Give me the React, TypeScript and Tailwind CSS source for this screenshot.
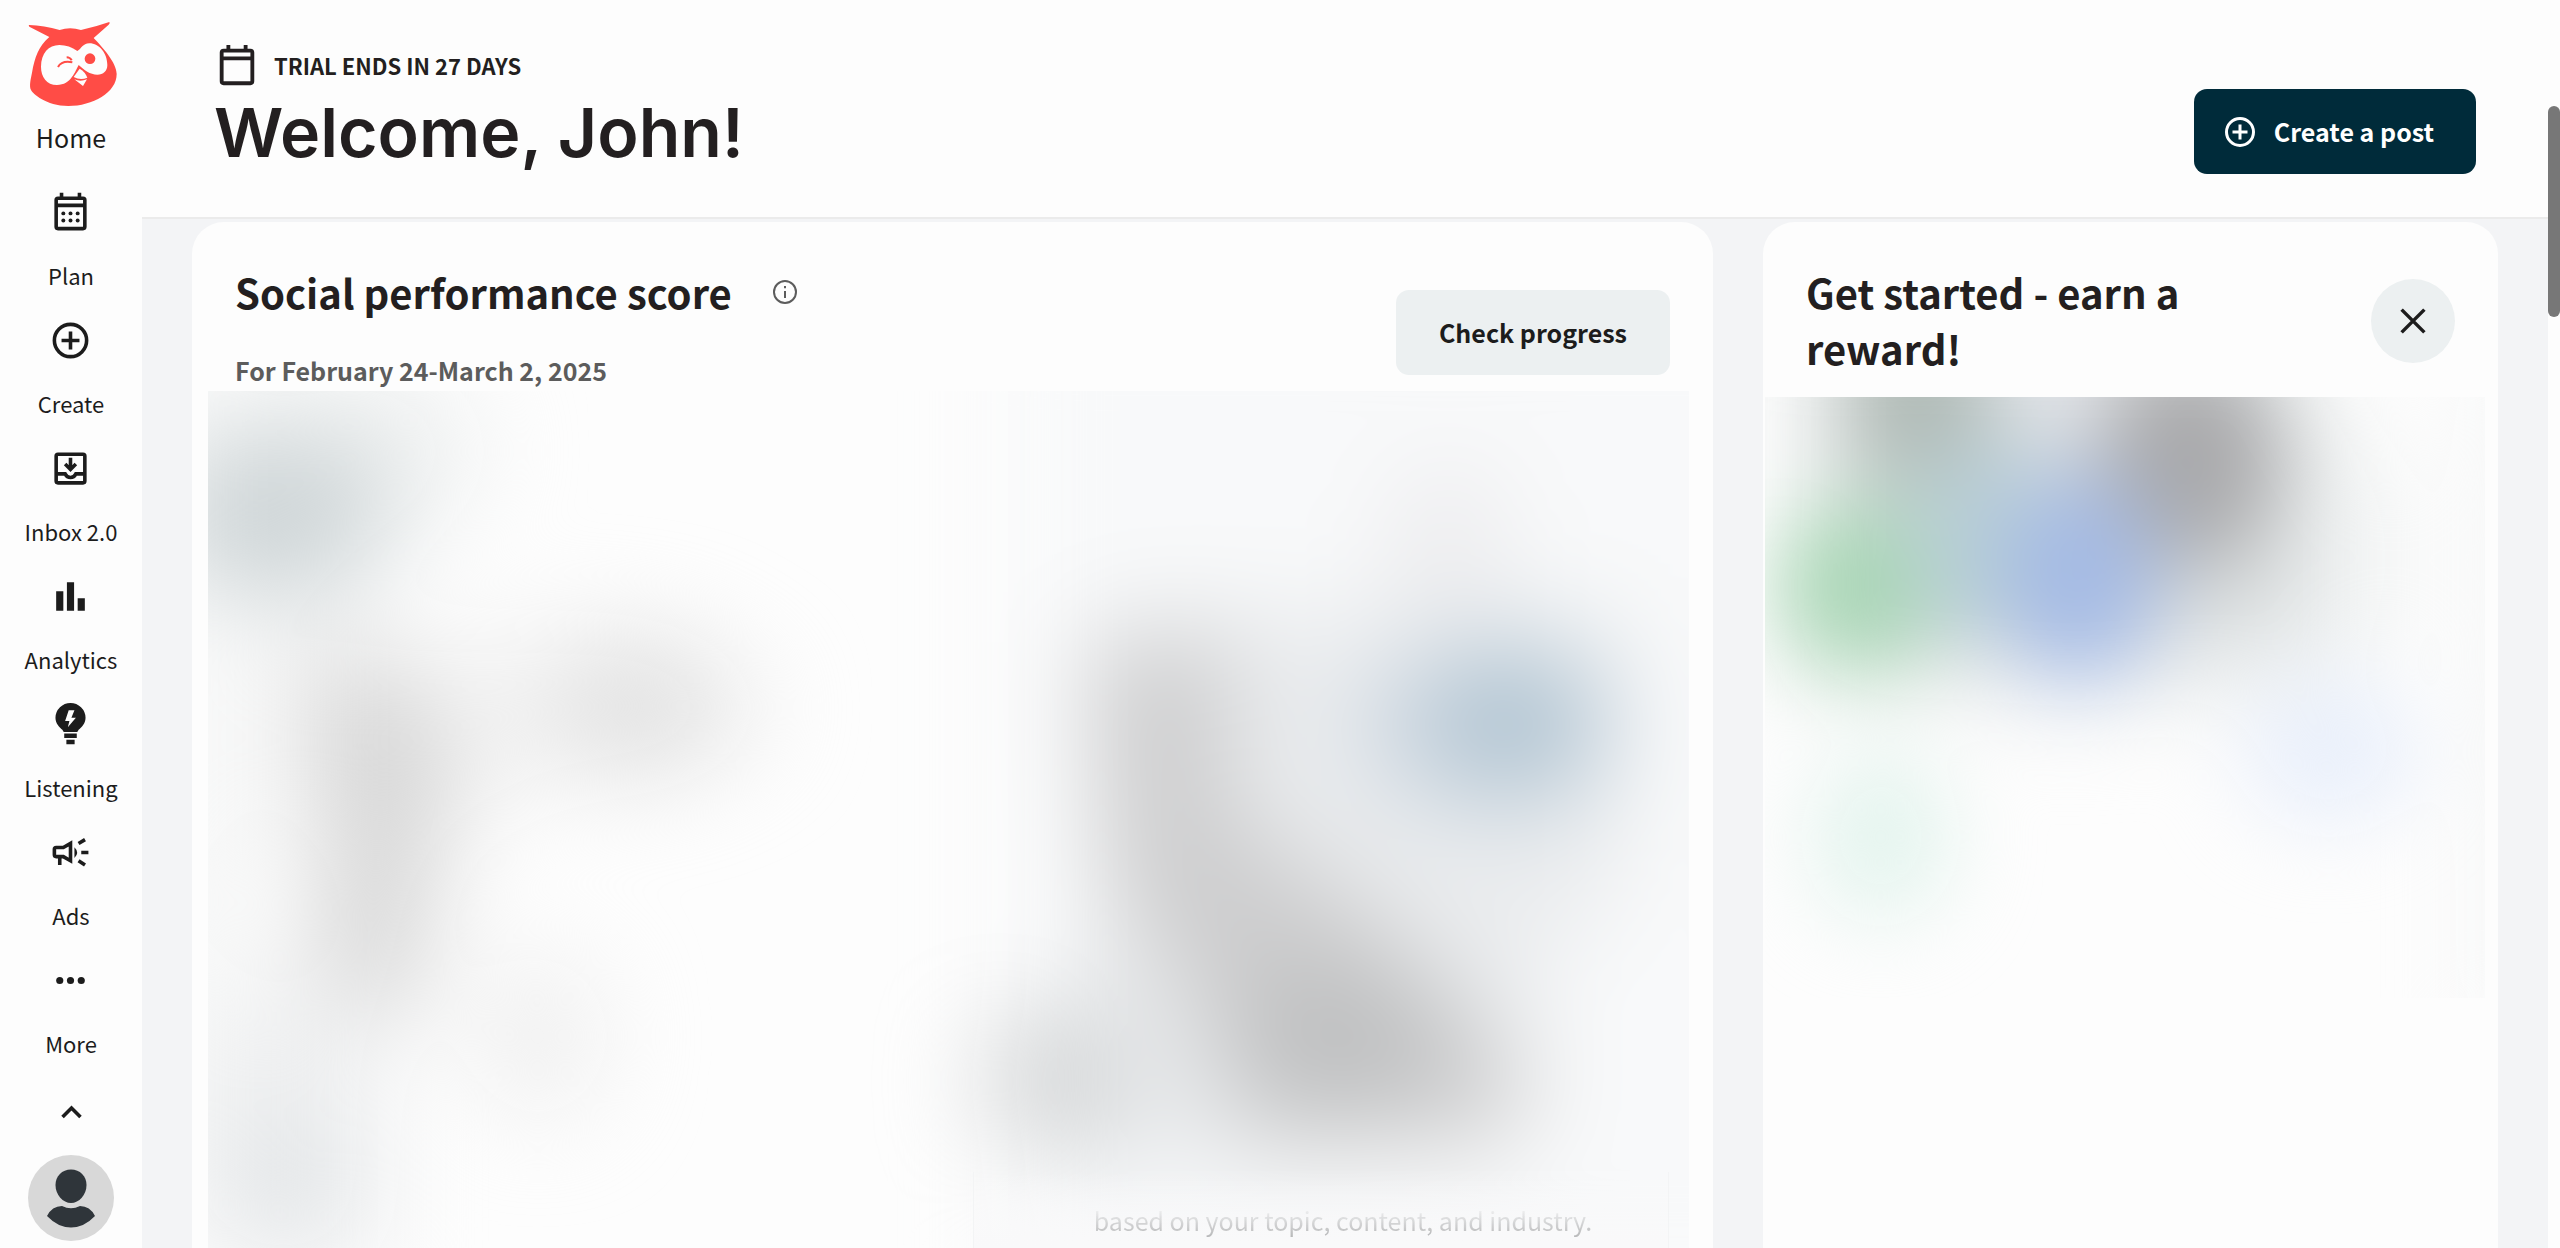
import type { ReactNode } from 'react';

function Icon({ children, className = 'h-[43px] w-[43px]' }: { children: ReactNode; className?: string }) {
  return (
    <svg viewBox="0 0 24 24" fill="none" stroke="currentColor" strokeWidth="2" className={className} aria-hidden="true">
      {children}
    </svg>
  );
}

function OwlLogo() {
  return (
    <svg viewBox="84 60 270 261" className="h-[87px] w-[90px]" aria-hidden="true">
      <path
        fill="#ff4c46"
        d="M87 75Q132 76 179 90Q210 80 243 90Q288 80 328 66Q331 70 326 74L281 114C306 140 350 188 350 222C350 278 278 318 205 318C138 318 98 280 93 270C87 258 92 238 96 218C104 172 116 138 148 111L88 80Q85 76 87 75Z"
      />
      <path
        fill="#fdfdfd"
        d="M178 135C198 135 216 142 232 153C244 147 248 130 268 130C298 130 322 160 322 195C322 213 310 224 292 224C270 224 252 210 236 195C226 212 214 255 171 255C140 255 123 231 123 200C123 160 146 135 178 135Z"
      />
      <circle cx="270" cy="176" r="16" fill="#ff4c46" />
      <path d="M174 201C182 187 197 183 217 187M200 172Q210 172 215 181" fill="none" stroke="#ff4c46" strokeWidth="6" />
      <path d="M239 206L221 231Q241 242 262 233Q256 216 239 206Z" fill="#fdfdfd" />
      <path d="M223 238Q241 246 261 238L249 258Z" fill="#fdfdfd" />
    </svg>
  );
}

const navItems = [
  {
    label: 'Plan',
    icon: (
      <>
        <rect x="4" y="4" width="16" height="17" rx="1" />
        <path d="M4 8h16M7 1v3M17 1v3" />
        <g fill="currentColor" stroke="none">
          <circle cx="8" cy="12.5" r="1.1" />
          <circle cx="12" cy="12.5" r="1.1" />
          <circle cx="16" cy="12.5" r="1.1" />
          <circle cx="8" cy="16.5" r="1.1" />
          <circle cx="12" cy="16.5" r="1.1" />
          <circle cx="16" cy="16.5" r="1.1" />
        </g>
      </>
    ),
  },
  {
    label: 'Create',
    icon: (
      <>
        <circle cx="12" cy="12" r="9" />
        <path d="M12 7v10M7 12h10" />
      </>
    ),
  },
  {
    label: 'Inbox 2.0',
    icon: (
      <>
        <rect x="4" y="4" width="16" height="16" rx="1" />
        <path d="M4 15h5q1 2 3 2t3-2h5M12 6v6.5M9 9.5l3 3 3-3" />
      </>
    ),
  },
  {
    label: 'Analytics',
    icon: <path fill="currentColor" stroke="none" d="M4 9h4v11H4zM10 4h4v16h-4zM16 13h4v7h-4z" />,
  },
  {
    label: 'Listening',
    icon: (
      <path
        fill="currentColor"
        stroke="none"
        fillRule="evenodd"
        d="M12 0a8.4 8.4 0 0 1 8.4 8.2c0 3.3-2.2 5.4-4 6.8-.2 1-.7 1.2-1.4 1.2H9c-.7 0-1.2-.2-1.4-1.2-1.8-1.4-4-3.5-4-6.8A8.4 8.4 0 0 1 12 0zM11 4 9 10h2.4l-.9 3.6L15 8.300h-2.500L14.200 4zM8.500 17h7v2.500h-7zM9.700 20.500h4.600V23H9.700z"
      />
    ),
  },
  {
    label: 'Ads',
    icon: (
      <>
        <path d="M8 9.200H4q-1 0-1 1v3.100q0 1 1 1h4l4 2.300V6.900zM6 15v4" />
        <path d="M14.200 9q3 3 0 6z" fill="currentColor" stroke="none" />
        <path d="M18 12h4M16.500 7l3.600-2.200M16.500 16.600l3.600 2.400" />
      </>
    ),
  },
  {
    label: 'More',
    icon: (
      <g fill="currentColor" stroke="none">
        <circle cx="6" cy="12" r="2" />
        <circle cx="12" cy="12" r="2" />
        <circle cx="18" cy="12" r="2" />
      </g>
    ),
  },
];

function Sidebar() {
  return (
    <aside className="flex w-[142px] shrink-0 flex-col items-center pt-5">
      <a href="#home" className="flex flex-col items-center gap-[14px] pl-1">
        <OwlLogo />
        <span className="pr-1 text-[25px] leading-8">Home</span>
      </a>
      <nav className="pt-[38px]">
        <ul className="flex flex-col gap-[30px]">
          {navItems.map((item) => (
            <li key={item.label}>
              <a href="#" className="flex flex-col items-center gap-[27px] text-[22px] leading-7 whitespace-nowrap">
                <Icon>{item.icon}</Icon>
                {item.label}
              </a>
            </li>
          ))}
        </ul>
      </nav>
      <button type="button" aria-label="Collapse" className="mt-[34px]">
        <Icon>
          <path d="m7 14.500 5-5 5 5" />
        </Icon>
      </button>
      <button type="button" aria-label="Account" className="mt-[21px]">
        <svg viewBox="0 0 86 86" className="h-[86px] w-[86px]">
          <circle cx="43" cy="43" r="43" fill="#d8d8d8" />
          <path d="M43 14.500c9 0 15.500 6.500 15.500 15.500 0 10-7.500 18-15.500 18S27.500 40 27.500 30c0-9 6.500-15.500 15.500-15.500z" fill="#2f353a" />
          <path d="M19 61q5-10 15-10 9 4.500 18 0 10 0 15 10Q56 72.500 43 72.500T19 61z" fill="#2f353a" />
        </svg>
      </button>
    </aside>
  );
}

function Header() {
  return (
    <header className="flex items-end justify-between border-b-2 border-[#ebebeb] bg-[#fdfdfd] px-[72px] pt-[43px] pb-[43px] text-[#231f20]">
      <div>
        <div className="flex items-center gap-[14px]">
          <Icon className="h-[46px] w-[46px]">
            <rect x="4" y="4" width="16" height="17" rx="1" />
            <path d="M4 8h16M7.500 1v3M16.500 1v3" />
          </Icon>
          <span className="pb-[2px] text-[22px] leading-[44px] font-semibold">TRIAL ENDS IN 27 DAYS</span>
        </div>
        <h1 className="pt-px font-[Inter,sans-serif] text-[68px] leading-[84px] font-semibold">Welcome, John!</h1>
      </div>
      <button type="button" className="flex h-[85px] items-center gap-4 rounded-[13px] bg-[#002b3a] pr-[42px] pl-7 text-[25px] font-bold text-white">
        <Icon className="h-9 w-9">
          <circle cx="12" cy="12" r="9" />
          <path d="M12 7v10M7 12h10" />
        </Icon>
        Create a post
      </button>
    </header>
  );
}

function ScoreBlur() {
  return (
    <svg viewBox="0 0 1481 857" preserveAspectRatio="none" className="absolute inset-0 h-full w-full" aria-hidden="true">
      <filter id="score-soft" x="-50%" y="-50%" width="200%" height="200%" colorInterpolationFilters="sRGB">
        <feGaussianBlur stdDeviation="50" />
      </filter>
      <rect x="0" y="0" width="1481" height="857" fill="#fdfdfd" />
      <g filter="url(#score-soft)">
        <rect x="800" y="-100" width="800" height="1000" fill="#f8f9fa" />
        <rect x="-60" y="-60" width="90" height="860" fill="#f5f6f6" />
        <ellipse cx="150" cy="60" rx="120" ry="90" fill="#eff1f1" />
        <ellipse cx="70" cy="125" rx="110" ry="85" fill="#ced5d7" />
        <path d="M60 240L400 240L560 300L540 350L330 400L240 450H60Z" fill="#f4f4f4" />
        <path d="M100 260Q200 260 240 350L225 480L205 630L100 630L120 460Z" fill="#d5d5d5" />
        <ellipse cx="430" cy="315" rx="95" ry="70" fill="#e1e1e1" />
        <ellipse cx="330" cy="645" rx="60" ry="80" fill="#efefef" />
        <path d="M20 600H170V880H-20Z" fill="#eff0f1" />
        <ellipse cx="80" cy="785" rx="70" ry="60" fill="#e2e5e7" />
        <ellipse cx="1240" cy="170" rx="60" ry="100" fill="#ececee" />
        <path d="M900 220H1420V480L1330 580L1330 720L1000 780L800 760V620L900 560Z" fill="#eaecee" />
        <path d="M880 250H1020V420L1160 520L1320 690L1300 750L1040 750L990 620L900 500Z" fill="#cdcdce" />
        <ellipse cx="1130" cy="650" rx="110" ry="75" fill="#bfc0c1" />
        <ellipse cx="1280" cy="335" rx="130" ry="80" fill="#ccd6e0" />
        <ellipse cx="1305" cy="330" rx="80" ry="70" fill="#b0c4d2" />
        <ellipse cx="850" cy="690" rx="75" ry="75" fill="#d5d7d8" />
      </g>
    </svg>
  );
}

function RewardBlur() {
  return (
    <svg viewBox="0 0 722 601" preserveAspectRatio="none" className="h-[601px] w-full" aria-hidden="true">
      <filter id="reward-soft" x="-50%" y="-50%" width="200%" height="200%" colorInterpolationFilters="sRGB">
        <feGaussianBlur stdDeviation="42" />
      </filter>
      <g filter="url(#reward-soft)">
        <rect x="710" y="-50" width="80" height="680" fill="#f6f7f7" />
        <path d="M20 -80H530L640 100V240L520 310L300 330L20 300Z" fill="#f2f4f4" />
        <path d="M70 -80H500L550 60V230L420 270L60 270Z" fill="#dbdfe0" />
        <ellipse cx="160" cy="0" rx="85" ry="90" fill="#b0bab5" />
        <ellipse cx="280" cy="-20" rx="60" ry="50" fill="#e6e8ee" />
        <ellipse cx="425" cy="65" rx="90" ry="105" fill="#a9a9ab" />
        <ellipse cx="95" cy="190" rx="85" ry="88" fill="#aad6b6" />
        <ellipse cx="215" cy="140" rx="70" ry="100" fill="#b9cfd6" />
        <ellipse cx="315" cy="180" rx="80" ry="105" fill="#a5bbe5" />
        <ellipse cx="566" cy="355" rx="90" ry="75" fill="#eaf0fb" />
        <ellipse cx="116" cy="440" rx="70" ry="85" fill="#e4f4ee" />
      </g>
    </svg>
  );
}

export default function App() {
  return (
    <div className="flex h-screen overflow-hidden bg-[#fdfdfd] font-['Source_Sans_Pro','Noto_Sans_CJK_SC',sans-serif] text-[#1c1c1c]">
      <Sidebar />
      <div className="flex min-w-0 flex-1 flex-col bg-[#f3f4f6]">
        <Header />
        <main className="grid flex-1 grid-cols-[minmax(0,1fr)_735px] gap-[50px] px-[50px] pt-[3px]">
          <section className="flex flex-col rounded-t-[32px] bg-[#fdfdfd]">
            <div className="flex items-start justify-between px-[43px] pt-[42px]">
              <div>
                <div className="flex items-center gap-10">
                  <h2 className="text-[40px] leading-[56px] font-semibold text-[#231f20]">Social performance score</h2>
                  <button type="button" aria-label="About this score" className="text-[#5c5c5c]">
                    <svg viewBox="0 0 26 26" className="h-[26px] w-[26px]" fill="none" stroke="currentColor" strokeWidth="2">
                      <circle cx="13" cy="13" r="11" />
                      <path d="M13 12v7M13 7v2.300" />
                    </svg>
                  </button>
                </div>
                <p className="mt-8 text-[25px] leading-9 font-semibold text-[#5c5c5c]">For February 24-March 2, 2025</p>
              </div>
              <button type="button" className="mt-[26px] mb-4 h-[85px] rounded-[13px] bg-[#ecf0f1] px-[43px] text-[25px] font-bold">
                Check progress
              </button>
            </div>
            <div className="relative mr-6 ml-4 flex flex-1 flex-col justify-end overflow-hidden">
              <ScoreBlur />
              <div className="relative mr-5 ml-auto w-[47%] border-x border-[#f3f4f5] bg-linear-to-b from-transparent to-[#f9f9fa] pt-[30px] pb-[10px] pl-11 text-center">
                <p className="bg-linear-to-b from-transparent from-10% to-[#b4b5b6] bg-clip-text text-[25px] leading-9 text-transparent">
                  based on your topic, content, and industry.
                </p>
              </div>
            </div>
          </section>

          <section className="rounded-t-[32px] bg-[#fdfdfd]">
            <div className="flex items-start justify-between px-[43px] pt-[42px]">
              <h2 className="max-w-[420px] text-[40px] leading-[56px] font-semibold text-[#231f20]">Get started - earn a reward!</h2>
              <button type="button" aria-label="Close" className="mt-[15px] flex h-[84px] w-[84px] items-center justify-center rounded-full bg-[#ecf0f1]">
                <Icon className="h-[42px] w-[42px]">
                  <path d="M5.500 5.500l13 13M18.500 5.500l-13 13" />
                </Icon>
              </button>
            </div>
            <div className="mt-[21px] mr-[13px] ml-[2px]">
              <RewardBlur />
            </div>
          </section>
        </main>
      </div>
      <div className="w-3 shrink-0 pt-[106px]">
        <div className="h-[211px] rounded-full bg-[#777777]" />
      </div>
    </div>
  );
}
